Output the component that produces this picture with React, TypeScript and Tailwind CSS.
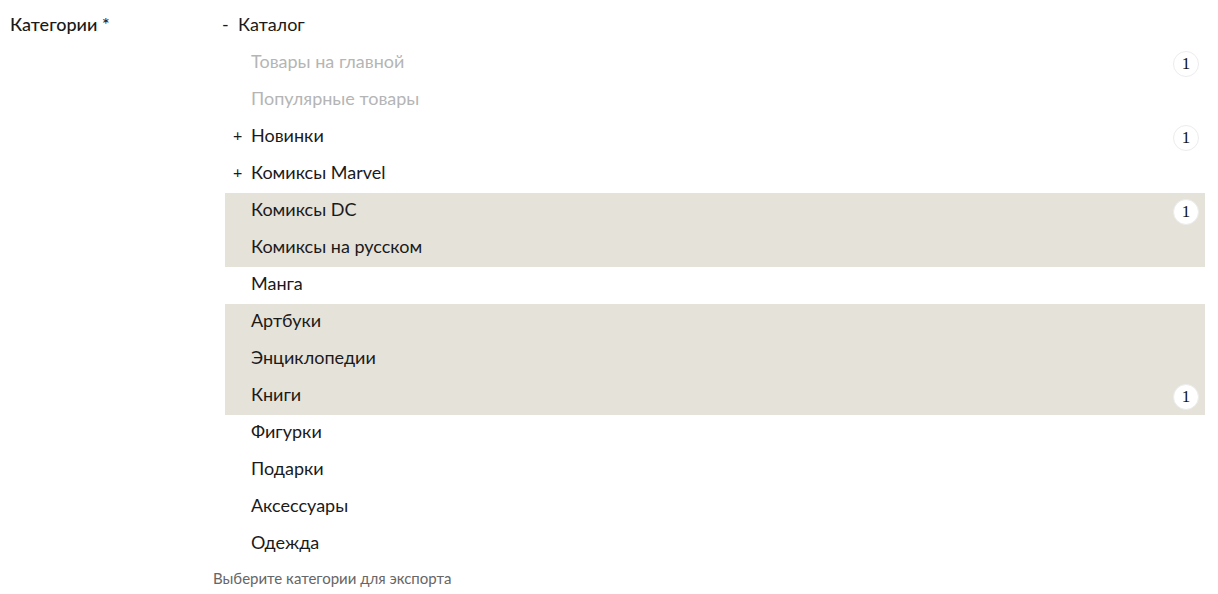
import React from "react";

type Item = {
  name: string;
  toggle?: "+";
  muted?: boolean;
  selected?: boolean;
  count?: number;
};

const items: Item[] = [
  { name: "Товары на главной", muted: true, count: 1 },
  { name: "Популярные товары", muted: true },
  { name: "Новинки", toggle: "+", count: 1 },
  { name: "Комиксы Marvel", toggle: "+" },
  { name: "Комиксы DC", selected: true, count: 1 },
  { name: "Комиксы на русском", selected: true },
  { name: "Манга" },
  { name: "Артбуки", selected: true },
  { name: "Энциклопедии", selected: true },
  { name: "Книги", selected: true, count: 1 },
  { name: "Фигурки" },
  { name: "Подарки" },
  { name: "Аксессуары" },
  { name: "Одежда" },
];

function Badge({ count }: { count: number }) {
  return (
    <span className="flex h-[26px] w-[26px] items-center justify-center rounded-full border border-[#ececec] bg-white text-[17px] text-[#111] [font-family:'Liberation_Serif',serif]">
      {count}
    </span>
  );
}

export default function App() {
  return (
    <div className="min-h-[594px] bg-white text-[18px] text-[#1a1a1a] [font-family:Lato,'Noto_Sans',sans-serif]">
      <div className="flex pt-[7px] pr-[13px]">
        {/* Field label */}
        <div className="w-[213px] shrink-0 pl-[10px] font-medium leading-[35px]">
          Категории *
        </div>

        {/* Category tree */}
        <div className="flex-1">
          <div className="flex h-[35px] items-center pl-[9px]">
            <span className="w-[16px]">-</span>
            <span>Каталог</span>
          </div>
          <div className="ml-[12px] mt-[3px]">
            {items.map((item) => (
              <div
                key={item.name}
                className={`flex h-[37px] items-center pr-[6px] ${
                  item.selected ? "bg-[#e5e2da]" : ""
                }`}
              >
                <span className="w-[26px] shrink-0 pb-[5px] pl-[8px] text-[16px]">
                  {item.toggle ?? ""}
                </span>
                <span
                  className={`flex-1 pb-[5px] ${
                    item.muted ? "text-[#b5b5b5]" : "text-[#1a1a1a]"
                  }`}
                >
                  {item.name}
                </span>
                {item.count !== undefined && <Badge count={item.count} />}
              </div>
            ))}
          </div>
          <p className="mt-[5px] text-[15px] leading-[20px] text-[#666]">
            Выберите категории для экспорта
          </p>
        </div>
      </div>
    </div>
  );
}
